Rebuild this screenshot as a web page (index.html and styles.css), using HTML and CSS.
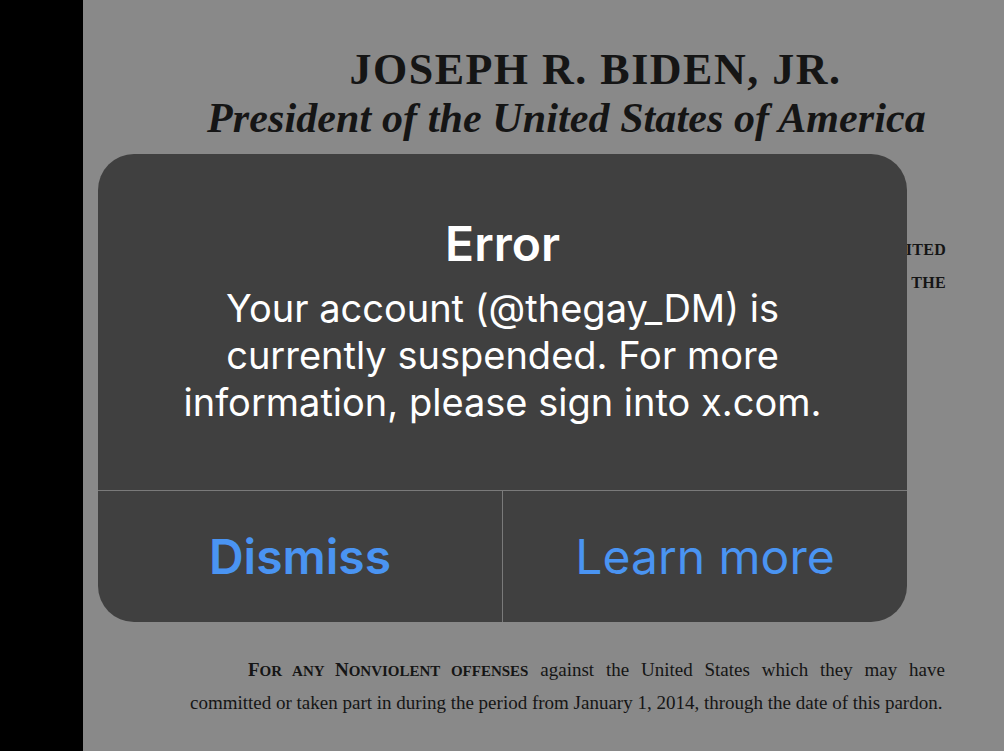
FILE: index.html
```html
<!DOCTYPE html>
<html>
<head>
<meta charset="utf-8">
<link rel="stylesheet" href="styles.css">
</head>
<body>
<div class="screen">
  <div class="edge"></div>
  <div class="doc">
    <div class="doc-head">
      <div class="name">JOSEPH R. BIDEN, JR.</div>
      <div class="title">President of the United States of America</div>
    </div>
    <div class="doc-hidden">
      <div class="sc-line">ITED</div>
      <div class="sc-line">THE</div>
    </div>
    <div class="doc-body">
      <p class="para"><span class="line line-first"><span class="sc"><span class="cap">F</span>OR ANY <span class="cap">N</span>ONVIOLENT OFFENSES</span> against the United States which they may have</span><span class="line">committed or taken part in during the period from January 1, 2014, through the date of this pardon.</span></p>
    </div>
  </div>
  <div class="alert">
    <div class="alert-content">
      <div class="alert-title">Error</div>
      <div class="alert-msg">Your account (@thegay_DM) is<br>currently suspended. For more<br>information, please sign into x.com.</div>
    </div>
    <div class="alert-actions">
      <div class="btn btn-primary">Dismiss</div>
      <div class="btn">Learn more</div>
    </div>
  </div>
</div>
</body>
</html>
```

FILE: styles.css
```css
html, body {
  margin: 0;
  padding: 0;
  background: #898989;
}
.screen {
  position: relative;
  width: 1004px;
  height: 751px;
  display: flex;
  overflow: hidden;
}
.edge {
  width: 83px;
  flex: none;
  background: #000;
}
.doc {
  flex: 1;
  min-width: 0;
  display: flex;
  flex-direction: column;
  font-family: "Liberation Serif", "Times New Roman", serif;
  color: #151515;
}
.doc-head {
  padding-top: 46px;
  display: flex;
  flex-direction: column;
  align-items: center;
}
.name {
  font-weight: bold;
  font-size: 44px;
  line-height: 48px;
  letter-spacing: 1.5px;
  margin-left: 104px;
  white-space: nowrap;
}
.title {
  font-weight: bold;
  font-style: italic;
  font-size: 42px;
  line-height: 48px;
  letter-spacing: 0.1px;
  margin-left: 46px;
  white-space: nowrap;
}
.doc-hidden {
  align-self: flex-end;
  margin-top: 99px;
  margin-right: 58px;
  display: flex;
  flex-direction: column;
  align-items: flex-end;
  gap: 15px;
}
.sc-line {
  font-weight: bold;
  font-size: 16px;
  line-height: 18px;
  letter-spacing: 0.3px;
  white-space: nowrap;
}
.doc-body {
  margin-top: 362px;
  padding: 0 59px 0 107px;
}
.para {
  margin: 0;
  font-size: 19px;
  line-height: 32px;
  letter-spacing: 0;
}
.line {
  display: block;
  white-space: nowrap;
}
.line-first {
  white-space: normal;
  text-align: justify;
  text-align-last: justify;
  padding-left: 58px;
}
.sc {
  font-weight: bold;
  font-size: 15px;
}
.cap {
  font-size: 19px;
}
.alert {
  position: absolute;
  left: 98px;
  top: 154px;
  width: 809px;
  height: 468px;
  background: #404040;
  border-radius: 36px;
  display: flex;
  flex-direction: column;
  overflow: hidden;
  font-family: Inter, "Noto Sans", sans-serif;
}
.alert-content {
  height: 336px;
  box-sizing: border-box;
  padding-top: 62px;
  display: flex;
  flex-direction: column;
  align-items: center;
  text-align: center;
  color: #fff;
}
.alert-title {
  font-size: 48px;
  line-height: 56px;
  font-weight: 600;
}
.alert-msg {
  margin-top: 13px;
  font-size: 38px;
  line-height: 47px;
  font-weight: 400;
}
.alert-actions {
  flex: 1;
  display: flex;
  border-top: 1px solid #7a7a7a;
}
.btn {
  flex: 1;
  display: flex;
  align-items: center;
  justify-content: center;
  color: #4a94f2;
  font-size: 48px;
  font-weight: 400;
}
.btn-primary {
  font-weight: 600;
  border-right: 1px solid #7a7a7a;
}
```
